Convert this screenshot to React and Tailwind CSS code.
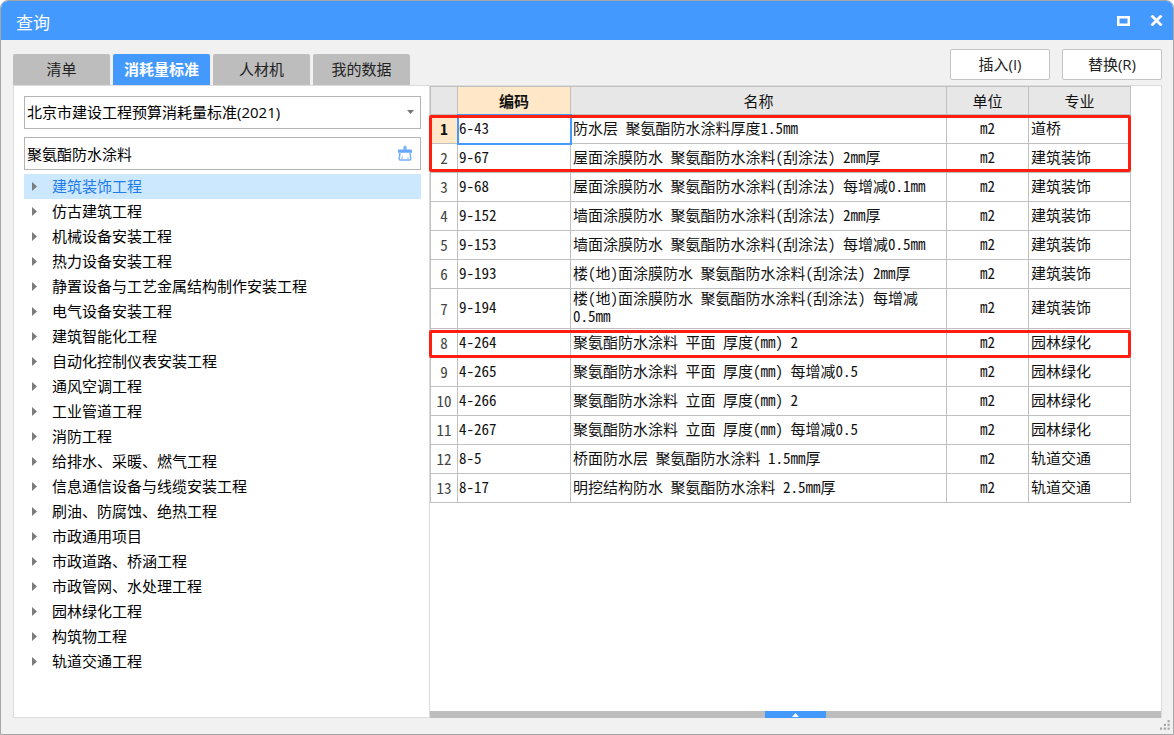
import { useState } from "react";

const TABS = ["清单", "消耗量标准", "人材机", "我的数据"];

const CATEGORIES = [
  "建筑装饰工程",
  "仿古建筑工程",
  "机械设备安装工程",
  "热力设备安装工程",
  "静置设备与工艺金属结构制作安装工程",
  "电气设备安装工程",
  "建筑智能化工程",
  "自动化控制仪表安装工程",
  "通风空调工程",
  "工业管道工程",
  "消防工程",
  "给排水、采暖、燃气工程",
  "信息通信设备与线缆安装工程",
  "刷油、防腐蚀、绝热工程",
  "市政通用项目",
  "市政道路、桥涵工程",
  "市政管网、水处理工程",
  "园林绿化工程",
  "构筑物工程",
  "轨道交通工程",
];

const ROWS = [
  { code: "6-43", name: "防水层 聚氨酯防水涂料厚度1.5mm", major: "道桥" },
  { code: "9-67", name: "屋面涂膜防水 聚氨酯防水涂料(刮涂法) 2mm厚", major: "建筑装饰" },
  { code: "9-68", name: "屋面涂膜防水 聚氨酯防水涂料(刮涂法) 每增减0.1mm", major: "建筑装饰" },
  { code: "9-152", name: "墙面涂膜防水 聚氨酯防水涂料(刮涂法) 2mm厚", major: "建筑装饰" },
  { code: "9-153", name: "墙面涂膜防水 聚氨酯防水涂料(刮涂法) 每增减0.5mm", major: "建筑装饰" },
  { code: "9-193", name: "楼(地)面涂膜防水 聚氨酯防水涂料(刮涂法) 2mm厚", major: "建筑装饰" },
  { code: "9-194", name: "楼(地)面涂膜防水 聚氨酯防水涂料(刮涂法) 每增减0.5mm", major: "建筑装饰" },
  { code: "4-264", name: "聚氨酯防水涂料 平面 厚度(mm) 2", major: "园林绿化" },
  { code: "4-265", name: "聚氨酯防水涂料 平面 厚度(mm) 每增减0.5", major: "园林绿化" },
  { code: "4-266", name: "聚氨酯防水涂料 立面 厚度(mm) 2", major: "园林绿化" },
  { code: "4-267", name: "聚氨酯防水涂料 立面 厚度(mm) 每增减0.5", major: "园林绿化" },
  { code: "8-5", name: "桥面防水层 聚氨酯防水涂料 1.5mm厚", major: "轨道交通" },
  { code: "8-17", name: "明挖结构防水 聚氨酯防水涂料 2.5mm厚", major: "轨道交通" },
];

function TitleBar() {
  return (
    <header className="h-[39px] shrink-0 flex items-center justify-between bg-[#4499ff] text-white pl-[15px] pr-[10px] pt-1">
      <h1 className="text-[17px] leading-6">查询</h1>
      <div className="flex items-center gap-5 pb-1">
        <button aria-label="最大化">
          <svg width="13" height="10" viewBox="0 0 13 10" className="block">
            <path d="M0 0h13v10H0zM2.5 2.5v5h8v-5z" fill="white" fillRule="evenodd" />
          </svg>
        </button>
        <button aria-label="关闭">
          <svg width="13" height="11" viewBox="0 0 13 11" className="block">
            <path d="M1.5 .5 11.5 10.5M11.5 .5 1.5 10.5" fill="none" stroke="white" strokeWidth="2.8" />
          </svg>
        </button>
      </div>
    </header>
  );
}

function Tabs({ active, onChange }) {
  return (
    <div role="tablist" className="flex gap-[3px]">
      {TABS.map((t) => (
        <button
          key={t}
          role="tab"
          aria-selected={t === active}
          onClick={() => onChange(t)}
          className={
            t === active
              ? "w-[97px] h-[31px] rounded-t-xs bg-[#4499ff] text-white font-bold"
              : "w-[97px] h-[31px] rounded-t-xs bg-[#bdbdbd] text-[#222]"
          }
        >
          {t}
        </button>
      ))}
    </div>
  );
}

function ActionButton({ children }) {
  return (
    <button className="w-[100px] h-[31px] rounded-xs border border-[#c4c4c4] bg-white text-[#222] pb-px">
      {children}
    </button>
  );
}

function BroomIcon() {
  return (
    <svg width="14" height="16" viewBox="0 0 14 16" className="block" fill="none">
      <path d="M5.4 5V2.2Q5.4.6 7 .6t1.6 1.6V5z" fill="#7fb6fb" />
      <path d="M1 4.6h12q1 0 1 1v2.2H0V5.600q0-1 1-1z" fill="#66a9fc" />
      <path d="M1.900 7.800 1.200 14q0 .9.900.9h9.800q.9 0 .9-.9l-.7-6.200" stroke="#74b0fb" strokeWidth="1.500" />
      <path d="M3.500 14.500 4.600 11.200M10 14.500v-2.200" stroke="#9cc8fd" strokeWidth="1.200" />
    </svg>
  );
}

function Sidebar() {
  const [keyword, setKeyword] = useState("聚氨酯防水涂料");
  const [selected, setSelected] = useState(CATEGORIES[0]);

  return (
    <aside className="w-[417px] shrink-0 border border-[#dcdcdc] bg-white pl-[10px] pr-2 pt-[10px]">
      <div className="relative">
        <select
          aria-label="标准"
          className="block w-full h-[33px] appearance-none border border-[#b4b4b4] bg-white pl-[2px] text-black outline-none"
        >
          <option>北京市建设工程预算消耗量标准(2021)</option>
        </select>
        <svg width="7" height="4" viewBox="0 0 7 4" className="absolute right-[7px] top-[14px] pointer-events-none">
          <path d="M0 0h7L3.5 4z" fill="#777" />
        </svg>
      </div>

      <div className="relative mt-2">
        <input
          aria-label="关键字"
          className="block w-full h-[33px] border border-[#b4b4b4] bg-white pl-[2px] pr-8 text-black outline-none"
          value={keyword}
          onChange={(e) => setKeyword(e.target.value)}
        />
        <button aria-label="清空" onClick={() => setKeyword("")} className="absolute right-[9px] top-2">
          <BroomIcon />
        </button>
      </div>

      <ul role="tree" className="mt-1">
        {CATEGORIES.map((c) => (
          <li key={c} role="treeitem" aria-selected={c === selected}>
            <button
              onClick={() => setSelected(c)}
              className={
                c === selected
                  ? "w-full h-[25px] flex items-center gap-[15px] pl-2 text-left bg-[#cce8ff] text-[#1f7cea]"
                  : "w-full h-[25px] flex items-center gap-[15px] pl-2 text-left text-black"
              }
            >
              <svg width="5" height="9" viewBox="0 0 5 9">
                <path d="M0 0 5 4.5 0 9z" fill="#7c7c7c" />
              </svg>
              <span>{c}</span>
            </button>
          </li>
        ))}
      </ul>
    </aside>
  );
}

function ResultTable() {
  return (
    <div className="relative mr-[30px]">
      <table className="w-full table-fixed border-collapse text-[#111] leading-[18px] [font-feature-settings:'hwid'] [&_td]:border [&_td]:border-[#c0c0c0] [&_td]:pb-[3px] [&_th]:border [&_th]:border-[#c0c0c0]">
        <colgroup>
          <col className="w-[27px]" />
          <col className="w-[113px]" />
          <col />
          <col className="w-[82px]" />
          <col className="w-[102px]" />
        </colgroup>
        <thead>
          <tr className="h-[28px] bg-[#e7e7e7]">
            <th></th>
            <th className="bg-[#ffe7c8] font-bold">编码</th>
            <th className="font-normal">名称</th>
            <th className="font-normal">单位</th>
            <th className="font-normal">专业</th>
          </tr>
        </thead>
        <tbody>
          {ROWS.map((r, i) => (
            <tr key={r.code} className="h-[29px]">
              <th
                scope="row"
                className={i === 0 ? "font-bold bg-[#ffe7c8]" : "font-normal text-[#444]"}
              >
                {i + 1}
              </th>
              <td className={i === 0 ? "pl-px outline-2 -outline-offset-1 outline-[#4499ff]" : "pl-px"}>
                {r.code}
              </td>
              <td className="pl-[2px] pr-5">{r.name}</td>
              <td className="text-center">m2</td>
              <td className="pl-[2px]">{r.major}</td>
            </tr>
          ))}
        </tbody>
      </table>

      {/* highlighted matches */}
      <div className="absolute -left-px right-0 top-[29px] h-[57px] rounded-xs border-3 border-[#ff1f10] pointer-events-none" />
      <div className="absolute -left-px right-0 top-[244px] h-[28px] rounded-xs border-3 border-[#ff1f10] pointer-events-none" />
    </div>
  );
}

function ResizeGrip() {
  return (
    <svg width="10" height="10" viewBox="0 0 10 10" className="absolute right-[3px] bottom-1" fill="#a8a8a8">
      <path d="M7.5 0h2.2v2.2H7.5zM7.5 3.8h2.2V6H7.5zM3.8 3.8H6V6H3.8zM7.5 7.6h2.2v2.2H7.5zM3.8 7.6H6v2.2H3.8zM0 7.6h2.2v2.2H0z" />
    </svg>
  );
}

export default function App() {
  const [tab, setTab] = useState("消耗量标准");

  return (
    <div className="relative min-h-screen flex flex-col overflow-hidden rounded-t-lg border border-[#a6a6a6] bg-[#f1f1f1] font-['Open_Sans','Noto_Sans_CJK_SC',sans-serif] text-[15px]">
      <TitleBar />

      <main className="flex-1 flex flex-col pl-3 pr-[11px] pb-4">
        <div className="h-[45px] flex items-end justify-between">
          <Tabs active={tab} onChange={setTab} />
          <div className="flex gap-3 pb-[5px]">
            <ActionButton>插入(I)</ActionButton>
            <ActionButton>替换(R)</ActionButton>
          </div>
        </div>

        <div className="flex-1 flex">
          <Sidebar />
          <section className="flex-1 min-w-0 flex flex-col justify-between border-t border-r border-[#dcdcdc] bg-white font-['Noto_Sans_CJK_SC',sans-serif]">
            <ResultTable />
            <div className="h-[7px] flex justify-center bg-[#bdbdbd]">
              <button aria-label="展开" className="w-[61px] flex items-center justify-center bg-[#4499ff]">
                <svg width="7" height="4" viewBox="0 0 7 4">
                  <path d="M3.5 0 7 4H0z" fill="white" />
                </svg>
              </button>
            </div>
          </section>
        </div>
      </main>

      <ResizeGrip />
    </div>
  );
}
